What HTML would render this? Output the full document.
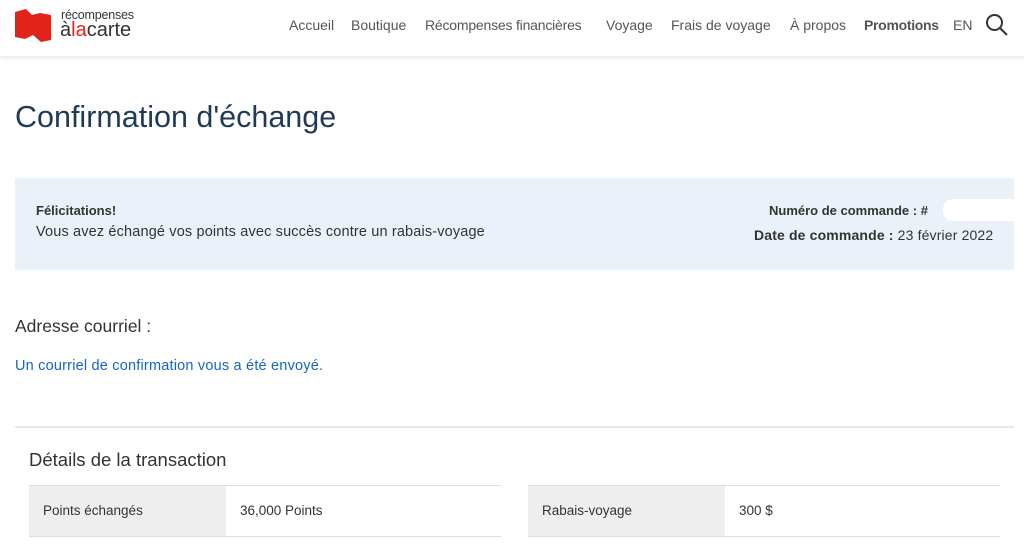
<!DOCTYPE html>
<html><head><meta charset="utf-8"><style>
*{margin:0;padding:0;box-sizing:border-box}
body{width:1024px;height:546px;overflow:hidden;background:#fff;font-family:"Liberation Sans",sans-serif;color:#333;position:relative}
.hdr{position:absolute;left:0;top:0;width:1024px;height:57px;background:#fff;box-shadow:0 2px 4px rgba(0,0,0,.08);border-bottom:1px solid #eee}
.nav{position:absolute;top:17px;font-size:14px;color:#555;white-space:nowrap}
.nav span{position:absolute}
.abs{position:absolute;white-space:nowrap}
</style></head><body>
<div class="hdr">
<svg class="abs" style="left:15px;top:9px" width="36" height="33" viewBox="0 0 36 33"><path d="M0 3 L11 0 L17 6 L25 4 L36 6 L36 31 L26 33 L18 26 L10 30 L0 28 Z" fill="#e2231a"/></svg>
<div class="abs" style="left:61px;top:8px;font-size:12.5px;color:#333;letter-spacing:-.2px">récompenses</div>
<div class="abs" style="left:60px;top:19px;font-size:20px;color:#333;letter-spacing:0px">à<span style="color:#e2231a">la</span>carte</div>
<div class="nav"><span style="left:289px">Accueil</span><span style="left:351px">Boutique</span><span style="left:425px;letter-spacing:-.2px">Récompenses financières</span><span style="left:606px">Voyage</span><span style="left:671px">Frais de voyage</span><span style="left:790px">À propos</span><span style="left:864px;font-weight:bold;letter-spacing:-.3px">Promotions</span><span style="left:953px">EN</span></div>
<svg class="abs" style="left:985px;top:13px" width="24" height="24" viewBox="0 0 24 24"><circle cx="9.5" cy="9.5" r="7.5" fill="none" stroke="#333" stroke-width="2"/><line x1="15" y1="15" x2="22" y2="22" stroke="#333" stroke-width="2"/></svg>
</div>
<div class="abs" style="left:15px;top:100px;font-size:30.5px;color:#1f3a57">Confirmation d'échange</div>
<div class="abs" style="left:15px;top:178px;width:999px;height:92px;background:#eaf1f8"></div>
<div class="abs" style="left:36px;top:203px;font-size:13px;font-weight:bold;color:#333">Félicitations!</div>
<div class="abs" style="left:36px;top:224px;font-size:14.5px;color:#333;letter-spacing:.15px">Vous avez échangé vos points avec succès contre un rabais-voyage</div>
<div class="abs" style="left:769px;top:203px;font-size:13px;font-weight:bold;color:#333">Numéro de commande : #</div>
<div class="abs" style="left:943px;top:199px;width:71px;height:22px;background:#fff;border-radius:10px 0 0 10px"></div>
<div class="abs" style="left:754px;top:227px;font-size:14px;color:#333;letter-spacing:.15px"><b>Date de commande :</b> 23 février 2022</div>
<div class="abs" style="left:15px;top:316px;font-size:17.5px;color:#333">Adresse courriel :</div>
<div class="abs" style="left:15px;top:358px;font-size:14.5px;color:#1565c0;letter-spacing:.2px">Un courriel de confirmation vous a été envoyé.</div>
<div class="abs" style="left:15px;top:426px;width:999px;height:2px;background:#e8e8ec"></div>
<div class="abs" style="left:29px;top:449px;font-size:18.5px;color:#333">Détails de la transaction</div>
<div class="abs" style="left:29px;top:485px;width:472px;height:52px;border-top:1px solid #ddd;border-bottom:1px solid #ddd"><div style="position:absolute;left:0;top:0;width:197px;height:50px;background:#eee"></div></div>
<div class="abs" style="left:43px;top:503px;font-size:13.5px">Points échangés</div>
<div class="abs" style="left:240px;top:503px;font-size:13.5px">36,000 Points</div>
<div class="abs" style="left:528px;top:485px;width:472px;height:52px;border-top:1px solid #ddd;border-bottom:1px solid #ddd"><div style="position:absolute;left:0;top:0;width:197px;height:50px;background:#eee"></div></div>
<div class="abs" style="left:542px;top:503px;font-size:13.5px">Rabais-voyage</div>
<div class="abs" style="left:739px;top:503px;font-size:13.5px">300 $</div>
</body></html>
